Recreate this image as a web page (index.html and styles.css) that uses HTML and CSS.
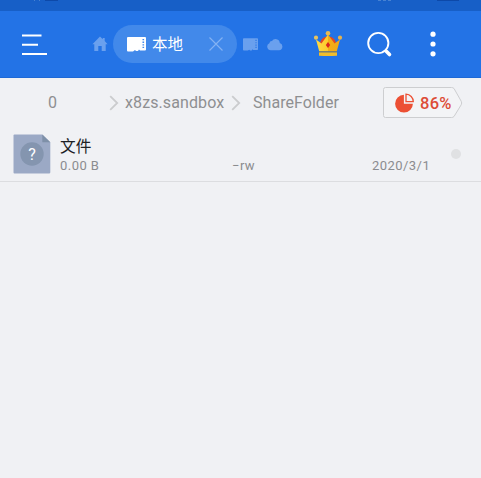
FILE: index.html
```html
<!DOCTYPE html>
<html lang="zh-CN">
<head>
<meta charset="utf-8">
<title>ShareFolder</title>
<link rel="stylesheet" href="styles.css">
</head>
<body>
<div class="status">
  <svg width="481" height="11" viewBox="0 0 481 11"><path d="M34 0h1v1h-1zM39 0h1v1h-1zM378 0h3v1h-3zM383 0h3v1h-3zM388 0h3v1h-3z" fill="#4782d2"/><path d="M45 0h13v1H45zM437 0h22v1h-22z" fill="#0d49a9"/></svg>
</div>
<header class="toolbar">
  <svg class="menu" width="26" height="22" viewBox="0 0 26 22"><path d="M0 2.5h19.5M0 11.8h16M0 21h25" stroke="#fff" stroke-width="2"/></svg>
  <svg class="home" width="16" height="16" viewBox="0 0 16 16"><path d="M8 .5 .4 8.3h1.9V15h4v-5h3.4v5h4V8.3h1.9L12.7 5V2h-1.9v1.2z" fill="#6aa0ee"/></svg>
  <div class="tab">
    <svg class="card" width="19" height="15" viewBox="0 0 19 15"><path d="M1 0h17a1 1 0 0 1 1 1v11.5a1 1 0 0 1-1 1h-5l-1-1-1 1.5H9l-1-1-2 1.5H1a1 1 0 0 1-1-1V1a1 1 0 0 1 1-1z" fill="#fff"/><path d="M16.3 2v10" stroke="#4289ea" stroke-width="1.6" stroke-dasharray="1.3 1.3"/></svg>
    <span class="tab-name">本地</span>
    <svg class="close" width="16" height="16" viewBox="0 0 16 16"><path d="m1.5 1.5 13 13m0-13-13 13" stroke="#83b2f3" stroke-width="1.2"/></svg>
  </div>
  <svg class="card-small" width="15" height="13" viewBox="0 0 19 16"><path d="M1 0h17a1 1 0 0 1 1 1v13a1 1 0 0 1-1 1h-5l-1-1-1 1.5H9l-1-1-2 1H1a1 1 0 0 1-1-1V1a1 1 0 0 1 1-1z" fill="#6aa0ee"/><path d="M16.5 2v12" stroke="#2373e6" stroke-width="1.4" stroke-dasharray="1.5 1.5"/></svg>
  <svg class="cloud" width="16" height="13" viewBox="0 0 16 13"><path d="M3.8 12.2A3.6 3.6 0 0 1 2.4 5.3 2.5 2.5 0 0 1 5 3.1 4.2 4.2 0 0 1 12.8 5a3.7 3.7 0 0 1-.7 7.2z" fill="#6aa0ee"/></svg>
  <svg class="crown" width="30" height="28" viewBox="0 0 30 28">
    <defs><linearGradient id="gold" x2="1" y2="0"><stop offset="0" stop-color="#ffdb43"/><stop offset=".49" stop-color="#fccb2d"/><stop offset=".51" stop-color="#f5ae16"/><stop offset="1" stop-color="#efa817"/></linearGradient></defs>
    <path d="M6.5 15Q7.5 6.5 15 6.5t8.5 8.5z" fill="#e24a22"/>
    <path d="M3 9.5 8.5 13.5 15 4.5 21.5 13.5 27 9.5 23.8 21.2H6.2z" fill="url(#gold)"/>
    <path d="M6 22.2h18v3.5q-9 .8-18 0z" fill="#f1bd2c"/><path d="M6 21.8h18" stroke="#8e7d4c" stroke-width="1"/>
    <circle cx="15" cy="3.2" r="2.3" fill="#e7b951"/><circle cx="3" cy="7.7" r="2.1" fill="#e7c360"/><circle cx="27" cy="7.7" r="2.1" fill="#e5b24d"/>
    <path d="m15 12 2.2 3-2.2 3-2.2-3z" fill="#d9251d"/>
  </svg>
  <svg class="search" width="26" height="27" viewBox="0 0 26 27"><circle cx="11.3" cy="12" r="10.1" fill="none" stroke="#fff" stroke-width="1.9"/><path d="m18 19 1.5 1.5" stroke="#fff" stroke-width="2"/><path d="m19.3 20.3 3.2 3.2" stroke="#fff" stroke-width="3.6" stroke-linecap="round"/></svg>
  <svg class="more" width="6" height="26" viewBox="0 0 6 26"><g fill="#fff"><circle cx="3" cy="3.2" r="2.6"/><circle cx="3" cy="13" r="2.6"/><circle cx="3" cy="22.8" r="2.6"/></g></svg>
</header>
<nav class="path">
  <span class="crumb root">0</span>
  <svg class="chevron" width="10" height="16" viewBox="0 0 10 16"><path d="m1.2 1.2 7 6.8-7 6.8" fill="none" stroke="#cbccce" stroke-width="1.8"/></svg>
  <span class="crumb sandbox">x8zs.sandbox</span>
  <svg class="chevron" width="10" height="16" viewBox="0 0 10 16"><path d="m1.2 1.2 7 6.8-7 6.8" fill="none" stroke="#cbccce" stroke-width="1.8"/></svg>
  <span class="crumb folder">ShareFolder</span>
  <div class="usage">
    <svg class="tag" width="80" height="32" viewBox="0 0 80 32"><path d="M2.5.5h66q1.5 0 2.5 1l7.2 12.7q1 1.8 0 3.6L71 29.5q-1 1-2.5 1h-66q-2 0-2-2v-26q0-2 2-2z" fill="#f3f4f6" stroke="#cdced0"/></svg>
    <svg class="pie" width="19" height="20" viewBox="0 0 19 20"><path d="M8.9 1.8v9h9A8.9 8.9 0 1 1 8.9 1.8z" fill="#ec5034"/><path d="M11 1.2v7.5h7.3A7.4 7.4 0 0 0 11 1.2z" fill="#f3f4f6" stroke="#ec5034" stroke-width="1.3"/></svg>
    <span class="percent">86%</span>
  </div>
</nav>
<main>
  <div class="file">
    <svg class="thumb" width="38" height="40" viewBox="0 0 38 40"><path d="M1.5.5h27.8l8 7.8v30q0 1.2-1.2 1.2H1.5q-1 0-1-1v-37q0-1 1-1z" fill="#9ba9c5"/><path d="M29.3.5v7.8h8z" fill="#7e90a8"/><circle cx="19" cy="20" r="11.7" fill="#8495af"/><text class="mark" x="19" y="25.5" text-anchor="middle">?</text></svg>
    <div class="info">
      <div class="name">文件</div>
      <div class="meta"><span class="size">0.00 B</span><span class="mode">−rw</span><span class="date">2020/3/1</span></div>
    </div>
    <span class="dot"></span>
  </div>
</main>
</body>
</html>
```
FILE: styles.css
```css
* { box-sizing: border-box; }
body {
  margin: 0;
  height: 478px;
  overflow: hidden;
  background: #f0f1f4;
  font-family: Roboto, "Noto Sans CJK SC", sans-serif;
}
svg { display: block; flex: none; }
.status { height: 11px; background: #175fc7; }
.toolbar {
  display: flex;
  align-items: center;
  height: 67px;
  padding-left: 22px;
  background: #2373e6;
  border-bottom: 1px solid #1e69d6;
}
.home { margin-left: 44px; }
.tab {
  display: flex;
  align-items: center;
  flex: none;
  width: 124px;
  height: 38px;
  margin-left: 5px;
  padding-left: 14px;
  border-radius: 19px;
  background: #4289ea;
}
.tab-name {
  width: 35px;
  margin-left: 6px;
  color: #fff;
  font-size: 15.5px;
  line-height: 20px;
  white-space: nowrap;
  padding-top: 1px;
}
.close { margin-left: 21px; }
.card-small { margin-left: 6px; }
.cloud { margin-left: 9px; }
.crown { margin-left: 30px; }
.search { margin-left: 24px; }
.more { margin-left: 37px; }
.path {
  display: flex;
  align-items: center;
  height: 50px;
  padding-left: 48px;
  color: #8e8f91;
  font-size: 16px;
  line-height: 20px;
}
.crumb { flex: none; white-space: nowrap; }
.root { width: 61px; }
.sandbox { width: 112px; padding-left: 6px; letter-spacing: .1px; }
.folder { width: 142px; padding-left: 12px; letter-spacing: .05px; }
.usage {
  display: flex;
  align-items: center;
  position: relative;
  width: 80px;
  height: 32px;
  padding-left: 12px;
}
.tag { position: absolute; left: 0; top: 0; }
.pie { position: relative; }
.percent {
  position: relative;
  margin-left: 6px;
  padding-top: 1px;
  color: #dd4b35;
  font-size: 16.5px;
  font-weight: 500;
  letter-spacing: .3px;
}
.file {
  display: flex;
  height: 54px;
  padding: 6px 19px 0 13px;
  border-bottom: 1px solid #dcdde0;
}
.mark { fill: #fff; font-size: 16px; }
.info { flex: none; width: 382px; margin-left: 9px; }
.name { height: 24px; padding-top: 1px; color: #202124; font-size: 15.7px; line-height: 24px; }
.meta {
  display: flex;
  height: 15px;
  color: #8b8c8f;
  font-size: 13px;
  line-height: 15px;
  letter-spacing: .45px;
}
.size { width: 172px; }
.mode { width: 140px; }
.dot {
  flex: none;
  width: 10px;
  height: 10px;
  margin: 15px 0 0 9px;
  border-radius: 50%;
  background: #e0e1e3;
}
```
